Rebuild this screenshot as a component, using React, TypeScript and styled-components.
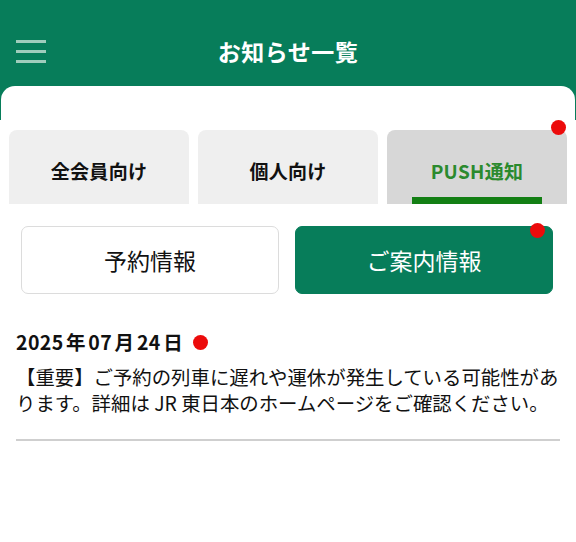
import styled, { createGlobalStyle } from "styled-components";

const GlobalStyle = createGlobalStyle`
  html, body {
    margin: 0;
    padding: 0;
    background: #ffffff;
  }
  body {
    font-family: "Noto Sans CJK JP", "Noto Sans", sans-serif;
  }
`;

const Page = styled.div`
  min-height: 100vh;
  display: flex;
  flex-direction: column;
  background: linear-gradient(#077d5a 0, #077d5a 120px, #ffffff 120px);
`;

const Header = styled.header`
  height: 86px;
  display: flex;
  align-items: center;
  justify-content: center;
  position: relative;
`;

const MenuButton = styled.div`
  position: absolute;
  left: 16px;
  top: 40px;
  width: 30px;
  display: flex;
  flex-direction: column;
  gap: 7px;
`;

const MenuLine = styled.span`
  display: block;
  height: 3px;
  background: #9fcdbc;
`;

const Title = styled.h1`
  margin: 0;
  margin-top: 16px;
  color: #ffffff;
  font-size: 23px;
  font-weight: 700;
  letter-spacing: 0.5px;
`;

const Card = styled.main`
  flex: 1;
  margin: 0 1px;
  background: #ffffff;
  border-radius: 14px 14px 0 0;
  padding-top: 44px;
`;

const TabRow = styled.div`
  display: grid;
  grid-template-columns: repeat(3, 180px);
  gap: 9px;
  padding: 0 8px;
`;

const Tab = styled.div<{ $active?: boolean }>`
  position: relative;
  height: 74px;
  border-radius: 8px 8px 0 0;
  background: ${(p) => (p.$active ? "#d7d7d7" : "#efefef")};
  color: ${(p) => (p.$active ? "#2b8a2e" : "#111111")};
  font-size: 19px;
  font-weight: 700;
  letter-spacing: 0.3px;
  display: flex;
  align-items: center;
  justify-content: center;
  padding-top: 6px;
  box-sizing: border-box;
`;

const TabBar = styled.span`
  position: absolute;
  left: 25px;
  right: 25px;
  bottom: 0;
  height: 7px;
  background: #137f14;
`;

const Dot = styled.span<{ $top: number; $right: number }>`
  position: absolute;
  top: ${(p) => p.$top}px;
  right: ${(p) => p.$right}px;
  width: 15px;
  height: 15px;
  border-radius: 50%;
  background: #ec0b0b;
`;

const ButtonRow = styled.div`
  display: grid;
  grid-template-columns: 258px 258px;
  gap: 16px;
  padding: 22px 0 0 20px;
`;

const SubButton = styled.div<{ $active?: boolean }>`
  position: relative;
  height: 68px;
  box-sizing: border-box;
  border-radius: 7px;
  border: 1.5px solid ${(p) => (p.$active ? "#077d5a" : "#dcdcdc")};
  background: ${(p) => (p.$active ? "#077d5a" : "#ffffff")};
  color: ${(p) => (p.$active ? "#ffffff" : "#111111")};
  font-size: 23px;
  display: flex;
  align-items: center;
  justify-content: center;
`;

const Notice = styled.section`
  margin: 0 15px;
  padding: 35px 0 23px;
  border-bottom: 2px solid #cfcfcf;
`;

const DateLine = styled.div`
  display: flex;
  align-items: center;
  gap: 10px;
  font-size: 19.5px;
  font-weight: 700;
  color: #111111;
  line-height: 26px;
`;

const DateText = styled.span`
  letter-spacing: 0.4px;
  word-spacing: -2.4px;
`;

const DateDot = styled.span`
  width: 15px;
  height: 15px;
  border-radius: 50%;
  background: #ec0b0b;
`;

const Body = styled.p`
  margin: 9px 0 0;
  font-size: 19.4px;
  line-height: 26px;
  color: #111111;
`;

export default function App() {
  return (
    <>
      <GlobalStyle />
      <Page>
        <Header>
          <MenuButton>
            <MenuLine />
            <MenuLine />
            <MenuLine />
          </MenuButton>
          <Title>お知らせ一覧</Title>
        </Header>
        <Card>
          <TabRow>
            <Tab>全会員向け</Tab>
            <Tab>個人向け</Tab>
            <Tab $active>
              PUSH通知
              <TabBar />
              <Dot $top={-10} $right={1} />
            </Tab>
          </TabRow>
          <ButtonRow>
            <SubButton>予約情報</SubButton>
            <SubButton $active>
              ご案内情報
              <Dot $top={-4} $right={7} />
            </SubButton>
          </ButtonRow>
          <Notice>
            <DateLine>
              <DateText>2025 年 07 月 24 日</DateText>
              <DateDot />
            </DateLine>
            <Body>
              【重要】ご予約の列車に遅れや運休が発生している可能性があります。詳細は JR 東日本のホームページをご確認ください。
            </Body>
          </Notice>
        </Card>
      </Page>
    </>
  );
}
